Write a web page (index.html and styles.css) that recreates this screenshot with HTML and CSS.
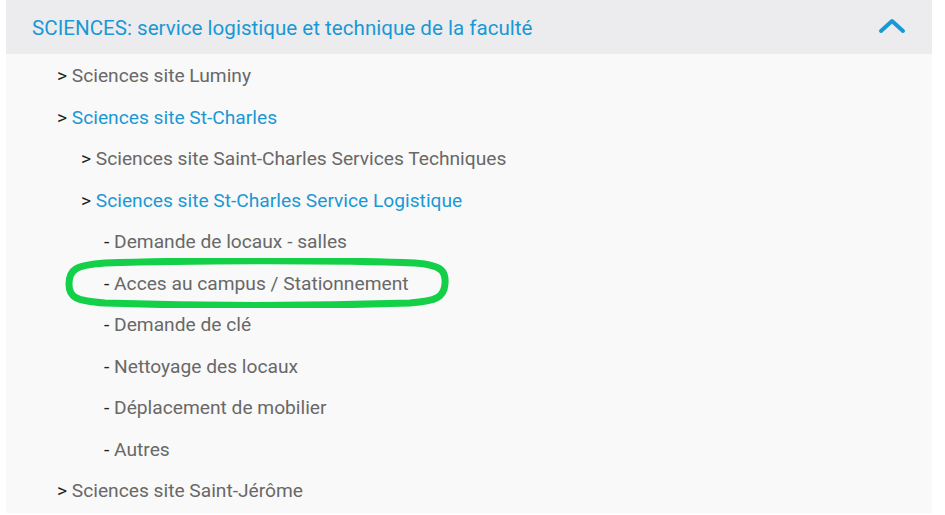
FILE: index.html
```html
<!DOCTYPE html>
<html lang="fr">
<head>
<meta charset="utf-8">
<link rel="stylesheet" href="styles.css">
</head>
<body>
<div class="panel">
  <div class="panel-header">
    <span class="panel-title">SCIENCES: service logistique et technique de la faculté</span>
    <svg class="chevron" width="28" height="16" viewBox="0 0 28 16"><path d="M3 13 L14 3 L25 13" fill="none" stroke="#1a98d5" stroke-width="4" stroke-linecap="round" stroke-linejoin="round"/></svg>
  </div>
  <ul class="tree">
    <li class="item lvl1">&gt; Sciences site Luminy</li>
    <li class="item lvl1">&gt; <span class="link">Sciences site St-Charles</span></li>
    <li class="item lvl2">&gt; Sciences site Saint-Charles Services Techniques</li>
    <li class="item lvl2">&gt; <span class="link">Sciences site St-Charles Service Logistique</span></li>
    <li class="item lvl3">- Demande de locaux - salles</li>
    <li class="item lvl3 marked">- Acces au campus / Stationnement
      <svg class="mark" width="384" height="50" viewBox="0 0 384 50"><path d="M40 5 C130 2 280 2 350 5 C378 7 381 14 380 26 C379 39 372 43 345 45 C250 48 130 48 40 45 C10 43 4 39 4 26 C4 12 10 7 40 5 Z" fill="none" stroke="#13d048" stroke-width="7"/></svg>
    </li>
    <li class="item lvl3">- Demande de clé</li>
    <li class="item lvl3">- Nettoyage des locaux</li>
    <li class="item lvl3">- Déplacement de mobilier</li>
    <li class="item lvl3">- Autres</li>
    <li class="item lvl1">&gt; Sciences site Saint-Jérôme</li>
  </ul>
</div>
</body>
</html>
```
FILE: styles.css
```css
html, body {
  margin: 0;
  padding: 0;
  background: #ffffff;
}
body {
  font-family: Roboto, "Liberation Sans", sans-serif;
  width: 945px;
  height: 515px;
  overflow: hidden;
}
.panel {
  margin-left: 6px;
  width: 926px;
  background: #f9f9f9;
  padding-bottom: 1px;
}
.panel-header {
  height: 54px;
  background: #ececee;
  display: flex;
  align-items: center;
  justify-content: space-between;
  padding: 0 26px 0 26px;
  box-sizing: border-box;
}
.panel-title {
  color: #1a98d5;
  font-size: 20.6px;
  position: relative;
  top: 1px;
}
.chevron {
  display: block;
  margin-top: -2px;
}
.tree {
  list-style: none;
  margin: 0;
  padding: 1px 0 0 0;
}
.item {
  height: 41.5px;
  line-height: 41.5px;
  font-size: 19.2px;
  color: #686868;
  white-space: nowrap;
}
.item::first-letter {
  color: #222;
}
.lvl1 { padding-left: 51px; }
.lvl2 { padding-left: 75px; }
.lvl3 { padding-left: 98px; }
.link { color: #1a98d5; }
.marked { position: relative; }
.mark {
  position: absolute;
  left: 59px;
  top: -5px;
}
```
